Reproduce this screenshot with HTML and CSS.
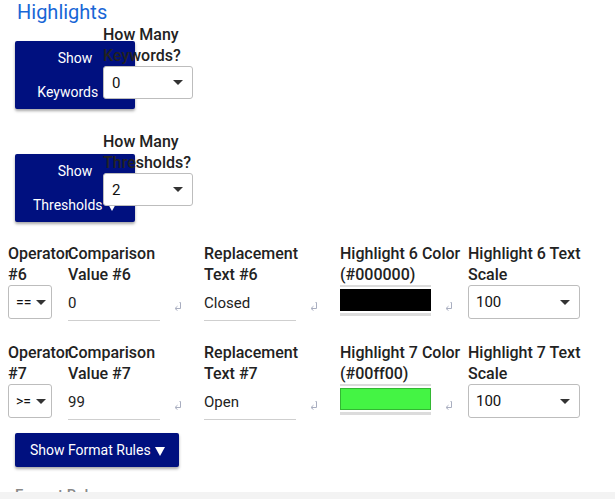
FILE: index.html
```html
<!DOCTYPE html>
<html lang="en">
<head>
    <meta charset="UTF-8">
    <meta name="viewport" content="width=device-width, initial-scale=1.0">
    <title>Highlights</title>
    <link rel="stylesheet" href="styles.css">
</head>

<body>
    <div class="page">
        <h1 class="title">Highlights</h1>

        <div class="group">
            <button class="btn btn-wide">Show Keywords <i class="tri"></i></button>
            <div class="group-field">
                <label class="label">How Many Keywords?</label>
                <div class="select select-count"><span>0</span><i class="caret"></i></div>
            </div>
        </div>

        <div class="group group-second">
            <button class="btn btn-wide">Show Thresholds <i class="tri"></i></button>
            <div class="group-field">
                <label class="label">How Many Thresholds?</label>
                <div class="select select-count"><span>2</span><i class="caret"></i></div>
            </div>
        </div>

        <div class="rule">
            <div class="field field-op">
                <label class="label">Operator #6</label>
                <div class="select select-op"><span>==</span><i class="caret"></i></div>
            </div>
            <div class="field field-text">
                <label class="label label-narrow">Comparison Value #6</label>
                <div class="control">
                    <input class="text-input" type="text" value="0">
                    <svg class="enter" width="9" height="9" viewBox="0 0 9 9"><path d="M6.5 0.5 H7.5 V6.5 H2.5 M4.5 4.2 L2 6.5 L4.5 8.6" fill="none" stroke="#a9aec0" stroke-width="1"/></svg>
                </div>
            </div>
            <div class="field field-text">
                <label class="label label-narrow">Replacement Text #6</label>
                <div class="control">
                    <input class="text-input" type="text" value="Closed">
                    <svg class="enter" width="9" height="9" viewBox="0 0 9 9"><path d="M6.5 0.5 H7.5 V6.5 H2.5 M4.5 4.2 L2 6.5 L4.5 8.6" fill="none" stroke="#a9aec0" stroke-width="1"/></svg>
                </div>
            </div>
            <div class="field field-color">
                <label class="label">Highlight 6 Color (#000000)</label>
                <div class="control">
                    <div class="swatch"><div class="swatch-fill fill-black"></div></div>
                    <svg class="enter" width="9" height="9" viewBox="0 0 9 9"><path d="M6.5 0.5 H7.5 V6.5 H2.5 M4.5 4.2 L2 6.5 L4.5 8.6" fill="none" stroke="#a9aec0" stroke-width="1"/></svg>
                </div>
            </div>
            <div class="field field-scale">
                <label class="label">Highlight 6 Text Scale</label>
                <div class="select select-scale"><span>100</span><i class="caret"></i></div>
            </div>
        </div>

        <div class="rule">
            <div class="field field-op">
                <label class="label">Operator #7</label>
                <div class="select select-op"><span>&gt;=</span><i class="caret"></i></div>
            </div>
            <div class="field field-text">
                <label class="label label-narrow">Comparison Value #7</label>
                <div class="control">
                    <input class="text-input" type="text" value="99">
                    <svg class="enter" width="9" height="9" viewBox="0 0 9 9"><path d="M6.5 0.5 H7.5 V6.5 H2.5 M4.5 4.2 L2 6.5 L4.5 8.6" fill="none" stroke="#a9aec0" stroke-width="1"/></svg>
                </div>
            </div>
            <div class="field field-text">
                <label class="label label-narrow">Replacement Text #7</label>
                <div class="control">
                    <input class="text-input" type="text" value="Open">
                    <svg class="enter" width="9" height="9" viewBox="0 0 9 9"><path d="M6.5 0.5 H7.5 V6.5 H2.5 M4.5 4.2 L2 6.5 L4.5 8.6" fill="none" stroke="#a9aec0" stroke-width="1"/></svg>
                </div>
            </div>
            <div class="field field-color">
                <label class="label">Highlight 7 Color (#00ff00)</label>
                <div class="control">
                    <div class="swatch"><div class="swatch-fill fill-green"></div></div>
                    <svg class="enter" width="9" height="9" viewBox="0 0 9 9"><path d="M6.5 0.5 H7.5 V6.5 H2.5 M4.5 4.2 L2 6.5 L4.5 8.6" fill="none" stroke="#a9aec0" stroke-width="1"/></svg>
                </div>
            </div>
            <div class="field field-scale">
                <label class="label">Highlight 7 Text Scale</label>
                <div class="select select-scale"><span>100</span><i class="caret"></i></div>
            </div>
        </div>

        <button class="btn btn-rules">Show Format Rules <i class="tri"></i></button>

        <h3 class="subtitle">Format Rules</h3>
    </div>
    <div class="bottom-bar"></div>
</body>
</html>
```

FILE: styles.css
```css
body {
    margin: 0;
    font-family: Roboto, "Liberation Sans", sans-serif;
    color: #222;
    background: #fff;
    overflow: hidden;
}

.page {
    padding: 0 8px;
}

.title {
    margin: 0 0 0 9px;
    font-size: 20px;
    line-height: 24px;
    font-weight: 400;
    color: #1866d6;
}

.label {
    display: block;
    font-size: 16px;
    line-height: 21px;
    font-weight: 500;
    color: #222;
}

.btn {
    border: none;
    border-radius: 2px;
    background-color: #00107f;
    color: #fff;
    font-family: Roboto, "Liberation Sans", sans-serif;
    font-size: 14px;
    line-height: 34px;
    padding: 0 16px;
    box-shadow: 0 2px 3px rgba(0, 0, 0, 0.35);
}

.tri {
    display: inline-block;
    width: 0;
    height: 0;
    margin-left: 1px;
    border-left: 5px solid transparent;
    border-right: 5px solid transparent;
    border-top: 9px solid #fff;
    vertical-align: -1px;
}

.btn-wide {
    width: 120px;
    flex-shrink: 0;
    margin-top: 17px;
}

.group {
    display: flex;
    align-items: flex-start;
    margin-left: 7px;
}

.group-second {
    margin-top: 22px;
}

.group-second .btn-wide {
    margin-top: 23px;
}

.group-field {
    width: 90px;
    margin-left: -32px;
}

.select {
    box-sizing: border-box;
    display: flex;
    align-items: center;
    justify-content: space-between;
    background: #fff;
    border: 1px solid #bdbdbd;
    border-radius: 3px;
    font-size: 15px;
    color: #111;
}

.select-count {
    width: 90px;
    height: 33px;
    padding: 0 9px 0 8px;
}

.select-op {
    width: 44px;
    height: 34px;
    padding: 0 5px 0 7px;
    font-size: 14px;
}

.select-scale {
    width: 112px;
    height: 34px;
    padding: 0 9px 0 7px;
}

.caret {
    width: 0;
    height: 0;
    border-left: 5px solid transparent;
    border-right: 5px solid transparent;
    border-top: 5px solid #333;
}

.rule {
    display: flex;
    align-items: flex-start;
    margin-top: 21px;
}

.field-op {
    width: 60px;
    flex-shrink: 0;
}

.field-text {
    width: 136px;
    flex-shrink: 0;
}

.label-narrow {
    width: 100px;
}

.field-color {
    width: 128px;
    flex-shrink: 0;
}

.field-scale {
    width: 125px;
    flex-shrink: 0;
}

.control {
    display: flex;
    align-items: flex-start;
    height: 36px;
}

.text-input {
    box-sizing: border-box;
    width: 92px;
    height: 36px;
    padding: 0;
    border: none;
    border-bottom: 1px solid #cfcfcf;
    font-family: Roboto, "Liberation Sans", sans-serif;
    font-size: 15px;
    color: #222;
    outline: none;
}

.enter {
    margin-left: 13px;
    margin-top: 17px;
}

.swatch {
    box-sizing: border-box;
    width: 91px;
    height: 31px;
    border-top: 2px solid #dcdcdc;
    border-bottom: 3px solid #dcdcdc;
    padding: 2px 0;
    background: #fff;
}

.swatch-fill {
    box-sizing: border-box;
    height: 100%;
    border: 1px solid rgba(0, 0, 0, 0.25);
}

.fill-black {
    background-color: #000;
}

.fill-green {
    background-color: #44f444;
}

.btn-rules {
    margin: 13px 0 0 7px;
    padding: 0 14px 0 15px;
}

.subtitle {
    margin: 19px 0 0 7px;
    font-size: 15px;
    font-weight: 500;
    color: #888;
}

.bottom-bar {
    position: fixed;
    left: 0;
    right: 0;
    bottom: 0;
    height: 7px;
    background: #f3f3f3;
}
```
